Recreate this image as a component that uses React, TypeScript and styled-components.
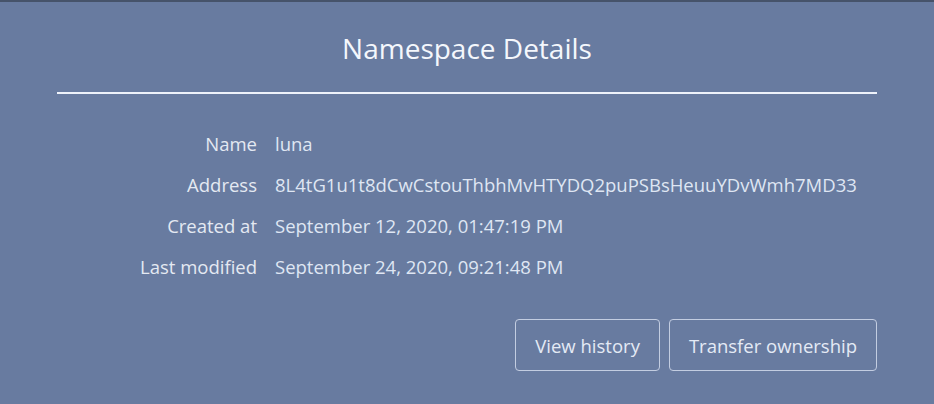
import React from "react";
import styled, { createGlobalStyle } from "styled-components";

const Global = createGlobalStyle`
  html, body { margin: 0; padding: 0; background: #687ba0; }
  body { font-family: "Open Sans", "Noto Sans", sans-serif; }
`;

const Card = styled.div`
  width: 934px;
  height: 404px;
  box-sizing: border-box;
  background: #687ba0;
  border-top: 2px solid #46536a;
  padding: 30px 57px 0 57px;
  display: flex;
  flex-direction: column;
`;

const Title = styled.h1`
  margin: 0;
  text-align: center;
  font-weight: 400;
  font-size: 28px;
  line-height: 32px;
  color: #f4f7fc;
`;

const Divider = styled.hr`
  margin: 28px 0 0 0;
  border: none;
  height: 2px;
  background: #eef2fa;
`;

const Details = styled.dl`
  margin: 38px 0 0 0;
  display: grid;
  grid-template-columns: 200px 1fr;
  column-gap: 18px;
  row-gap: 17px;
  font-size: 18.5px;
  line-height: 24px;
`;

const Label = styled.dt`
  text-align: right;
  color: #e4e9f2;
`;

const Value = styled.dd`
  margin: 0;
  color: #dfe6f3;
  white-space: nowrap;
`;

const Actions = styled.div`
  margin-top: 40px;
  display: flex;
  justify-content: flex-end;
  gap: 9px;
`;

const Button = styled.button`
  height: 52px;
  padding: 0 19px;
  background: transparent;
  border: 1px solid #c3cde1;
  border-radius: 4px;
  color: #e4eaf5;
  font-family: inherit;
  font-size: 18.5px;
  cursor: pointer;
`;

const rows: [string, string][] = [
  ["Name", "luna"],
  ["Address", "8L4tG1u1t8dCwCstouThbhMvHTYDQ2puPSBsHeuuYDvWmh7MD33"],
  ["Created at", "September 12, 2020, 01:47:19 PM"],
  ["Last modified", "September 24, 2020, 09:21:48 PM"],
];

export default function App() {
  return (
    <>
      <Global />
      <Card>
        <Title>Namespace Details</Title>
        <Divider />
        <Details>
          {rows.map(([k, v]) => (
            <React.Fragment key={k}>
              <Label>{k}</Label>
              <Value>{v}</Value>
            </React.Fragment>
          ))}
        </Details>
        <Actions>
          <Button>View history</Button>
          <Button>Transfer ownership</Button>
        </Actions>
      </Card>
    </>
  );
}
